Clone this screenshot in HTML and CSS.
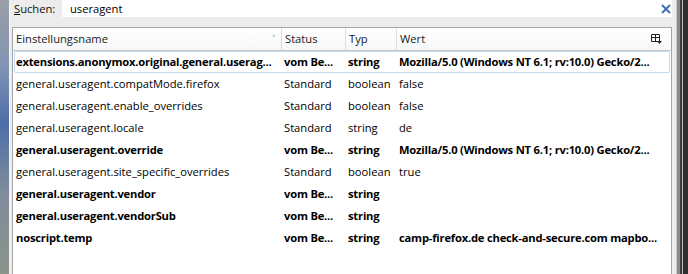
FILE: index.html
```html
<!DOCTYPE html>
<html>
<head>
	<title>about:config</title>
	<meta charset="utf-8">
	<link rel="stylesheet" href="styles.css">
</head>
<body>
	<div class="desk"></div>
	<div class="panel">
		<div class="search">
			<label class="search-label"><u>S</u>uchen:</label>
			<div class="search-box">
				<span class="search-text">useragent</span>
				<svg class="clear" width="10" height="10" viewBox="0 0 10 10"><path d="M1 1L9 9M9 1L1 9" stroke="#3a6db5" stroke-width="1.8"/></svg>
			</div>
		</div>
		<div class="tree">
			<div class="head">
				<div class="col c-name">Einstellungsname<span class="sort">&#708;</span></div>
				<div class="col">Status</div>
				<div class="col">Typ</div>
				<div class="col">Wert</div>
				<div class="col c-pick">
					<svg width="11" height="10" viewBox="0 0 11 10"><path d="M0.5 0.5H8.5V7.5H0.5Z M0.5 3.5H8.5 M4.5 0.5V7.5" fill="none" stroke="#222"/><path d="M6 7H11L8.5 10Z" fill="#222"/></svg>
				</div>
			</div>
			<div class="row mod focus"><span>extensions.anonymox.original.general.userag...</span><span>vom Be...</span><span>string</span><span>Mozilla/5.0 (Windows NT 6.1; rv:10.0) Gecko/2...</span></div>
			<div class="row"><span>general.useragent.compatMode.firefox</span><span>Standard</span><span>boolean</span><span>false</span></div>
			<div class="row"><span>general.useragent.enable_overrides</span><span>Standard</span><span>boolean</span><span>false</span></div>
			<div class="row"><span>general.useragent.locale</span><span>Standard</span><span>string</span><span>de</span></div>
			<div class="row mod"><span>general.useragent.override</span><span>vom Be...</span><span>string</span><span>Mozilla/5.0 (Windows NT 6.1; rv:10.0) Gecko/2...</span></div>
			<div class="row"><span>general.useragent.site_specific_overrides</span><span>Standard</span><span>boolean</span><span>true</span></div>
			<div class="row mod"><span>general.useragent.vendor</span><span>vom Be...</span><span>string</span><span></span></div>
			<div class="row mod"><span>general.useragent.vendorSub</span><span>vom Be...</span><span>string</span><span></span></div>
			<div class="row mod"><span>noscript.temp</span><span>vom Be...</span><span>string</span><span>camp-firefox.de check-and-secure.com mapbo...</span></div>
		</div>
	</div>
	<div class="edge"></div>
</body>
</html>
```
FILE: styles.css
```css
html,body{
	margin:0;
	height:100%;
	overflow:hidden;
}
*{
	box-sizing:border-box;
}
body{
	display:flex;
	font-family:"Open Sans","Noto Sans",sans-serif;
	font-size:11.2px;
	color:#000;
	background:#eeeeee;
}
.desk{
	width:10px;
	background:linear-gradient(to bottom,#9a9fa4,#8093b4 25%,#4c6ea8 45%,#7f8c9c 70%,#8b948a);
	border-right:1px solid #f6f6f6;
}
.panel{
	flex:1;
	display:flex;
	flex-direction:column;
	background:#ececec;
	padding-left:2px;
}
.search{
	display:flex;
	height:27px;
	padding-right:4px;
}
.search-label{
	padding:0 0 0 2px;
	width:50px;
	line-height:17px;
	color:#111;
}
.search-box{
	flex:1;
	height:17px;
	background:#fff;
	display:flex;
	align-items:center;
	justify-content:space-between;
	padding:0 1px 0 8px;
}
.search-text{
	line-height:17px;
}
.tree{
	flex:1;
	margin-right:4px;
	border:1px solid #a6a6a6;
	border-bottom:none;
	background:#fff;
}
.head{
	display:grid;
	grid-template-columns:269px 64px 51px 1fr 26px;
	height:23px;
	border-bottom:1px solid #c9c9c9;
	background:linear-gradient(to bottom,#ffffff,#f6f7f9);
}
.head .col{
	padding-left:3px;
	line-height:22px;
	border-right:1px solid #dedede;
	color:#1a1a1a;
	position:relative;
}
.head .col:nth-child(4){
	border-right:none;
}
.head .c-pick{
	border-right:none;
	display:flex;
	align-items:center;
	padding-left:6px;
}
.sort{
	position:absolute;
	right:6px;
	top:0;
	font-size:10px;
	color:#6b7b92;
}
.row{
	display:grid;
	grid-template-columns:267px 64px 51px 1fr;
	height:22px;
	line-height:20px;
	margin:0 1px;
	border:1px solid transparent;
}
.row span{
	padding-left:2px;
	white-space:nowrap;
	overflow:hidden;
}
.row span:first-child{
	padding-left:1px;
}
.row.mod{
	font-weight:bold;
	letter-spacing:-0.2px;
}
.row.focus{
	border-color:#c2d9f1;
	border-radius:2px;
}
.edge{
	width:12px;
	background:linear-gradient(to right,#c9c9c9 0,#c9c9c9 1px,#8a8a8a 1px,#8a8a8a 4px,#3b3b3b 4px,#3b3b3b 6px,#bdbdbd 6px,#bdbdbd 7px,#2e2e2e 7px);
}
```
